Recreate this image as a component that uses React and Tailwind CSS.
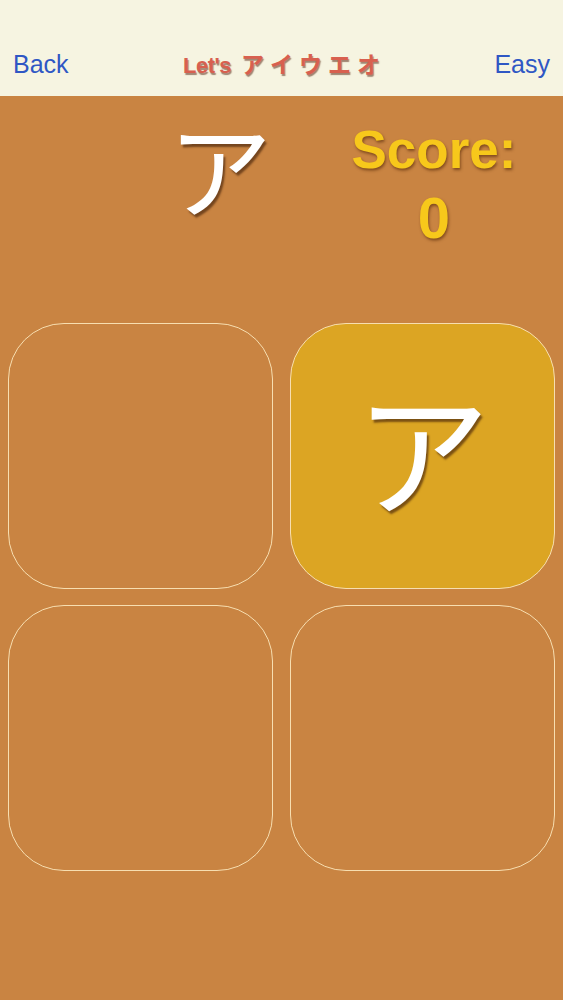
import React from 'react';

const cards = [null, 'ア', null, null];
const kana = ['ア', 'イ', 'ウ', 'エ', 'オ'];

export default function App() {
  return (
    <div className="w-[563px] h-[1000px] bg-[#c98442] flex flex-col" style={{ fontFamily: '"Liberation Sans", "Noto Sans CJK JP", sans-serif' }}>
      {/* header */}
      <div className="h-[96px] bg-[#f6f4e1] flex items-end px-[13px] pb-[19px]">
        <span className="flex-1 text-[25px] leading-none text-[#2f57c4]">Back</span>
        <span className="flex items-baseline gap-[6px] text-[22px] leading-none font-bold text-[#d8604f] [text-shadow:1px_2px_1px_rgba(90,40,20,0.55)]">
          <span className="tracking-[-0.5px] mr-[4px]">Let's</span>
          {kana.map((k) => (
            <span key={k} className="text-[23px]">{k}</span>
          ))}
        </span>
        <span className="flex-1 text-right text-[25px] leading-none text-[#2f57c4]">Easy</span>
      </div>

      {/* question + score */}
      <div className="flex h-[227px]">
        <div className="w-[282px] flex justify-center pl-[158px] pt-[18px]">
          <span className="text-[104px] leading-none text-white font-['Noto_Sans_CJK_JP'] [text-shadow:2px_3px_2px_rgba(70,35,10,0.65)]">ア</span>
        </div>
        <div className="flex-1 flex flex-col items-center pt-[27px] pl-[23px]">
          <span className="text-[53px] leading-none font-bold text-[#f7c81b] [text-shadow:1px_2px_3px_rgba(90,45,10,0.65)]">Score:</span>
          <span className="mt-[13px] text-[58px] leading-none font-bold text-[#f7c81b] [text-shadow:1px_2px_3px_rgba(90,45,10,0.65)]">0</span>
        </div>
      </div>

      {/* answer grid */}
      <div className="grid grid-cols-2 gap-x-[17px] gap-y-[16px] px-[8px]">
        {cards.map((c, i) => (
          <div
            key={i}
            className={`h-[266px] rounded-[56px] border-[1.5px] border-[#f7deb0] flex items-center justify-center ${c ? 'bg-[#dca523]' : ''}`}
          >
            {c && (
              <span className="text-[135px] leading-none text-white font-['Noto_Sans_CJK_JP'] [text-shadow:2px_3px_2px_rgba(70,35,10,0.65)] -mt-[18px]">{c}</span>
            )}
          </div>
        ))}
      </div>
    </div>
  );
}
